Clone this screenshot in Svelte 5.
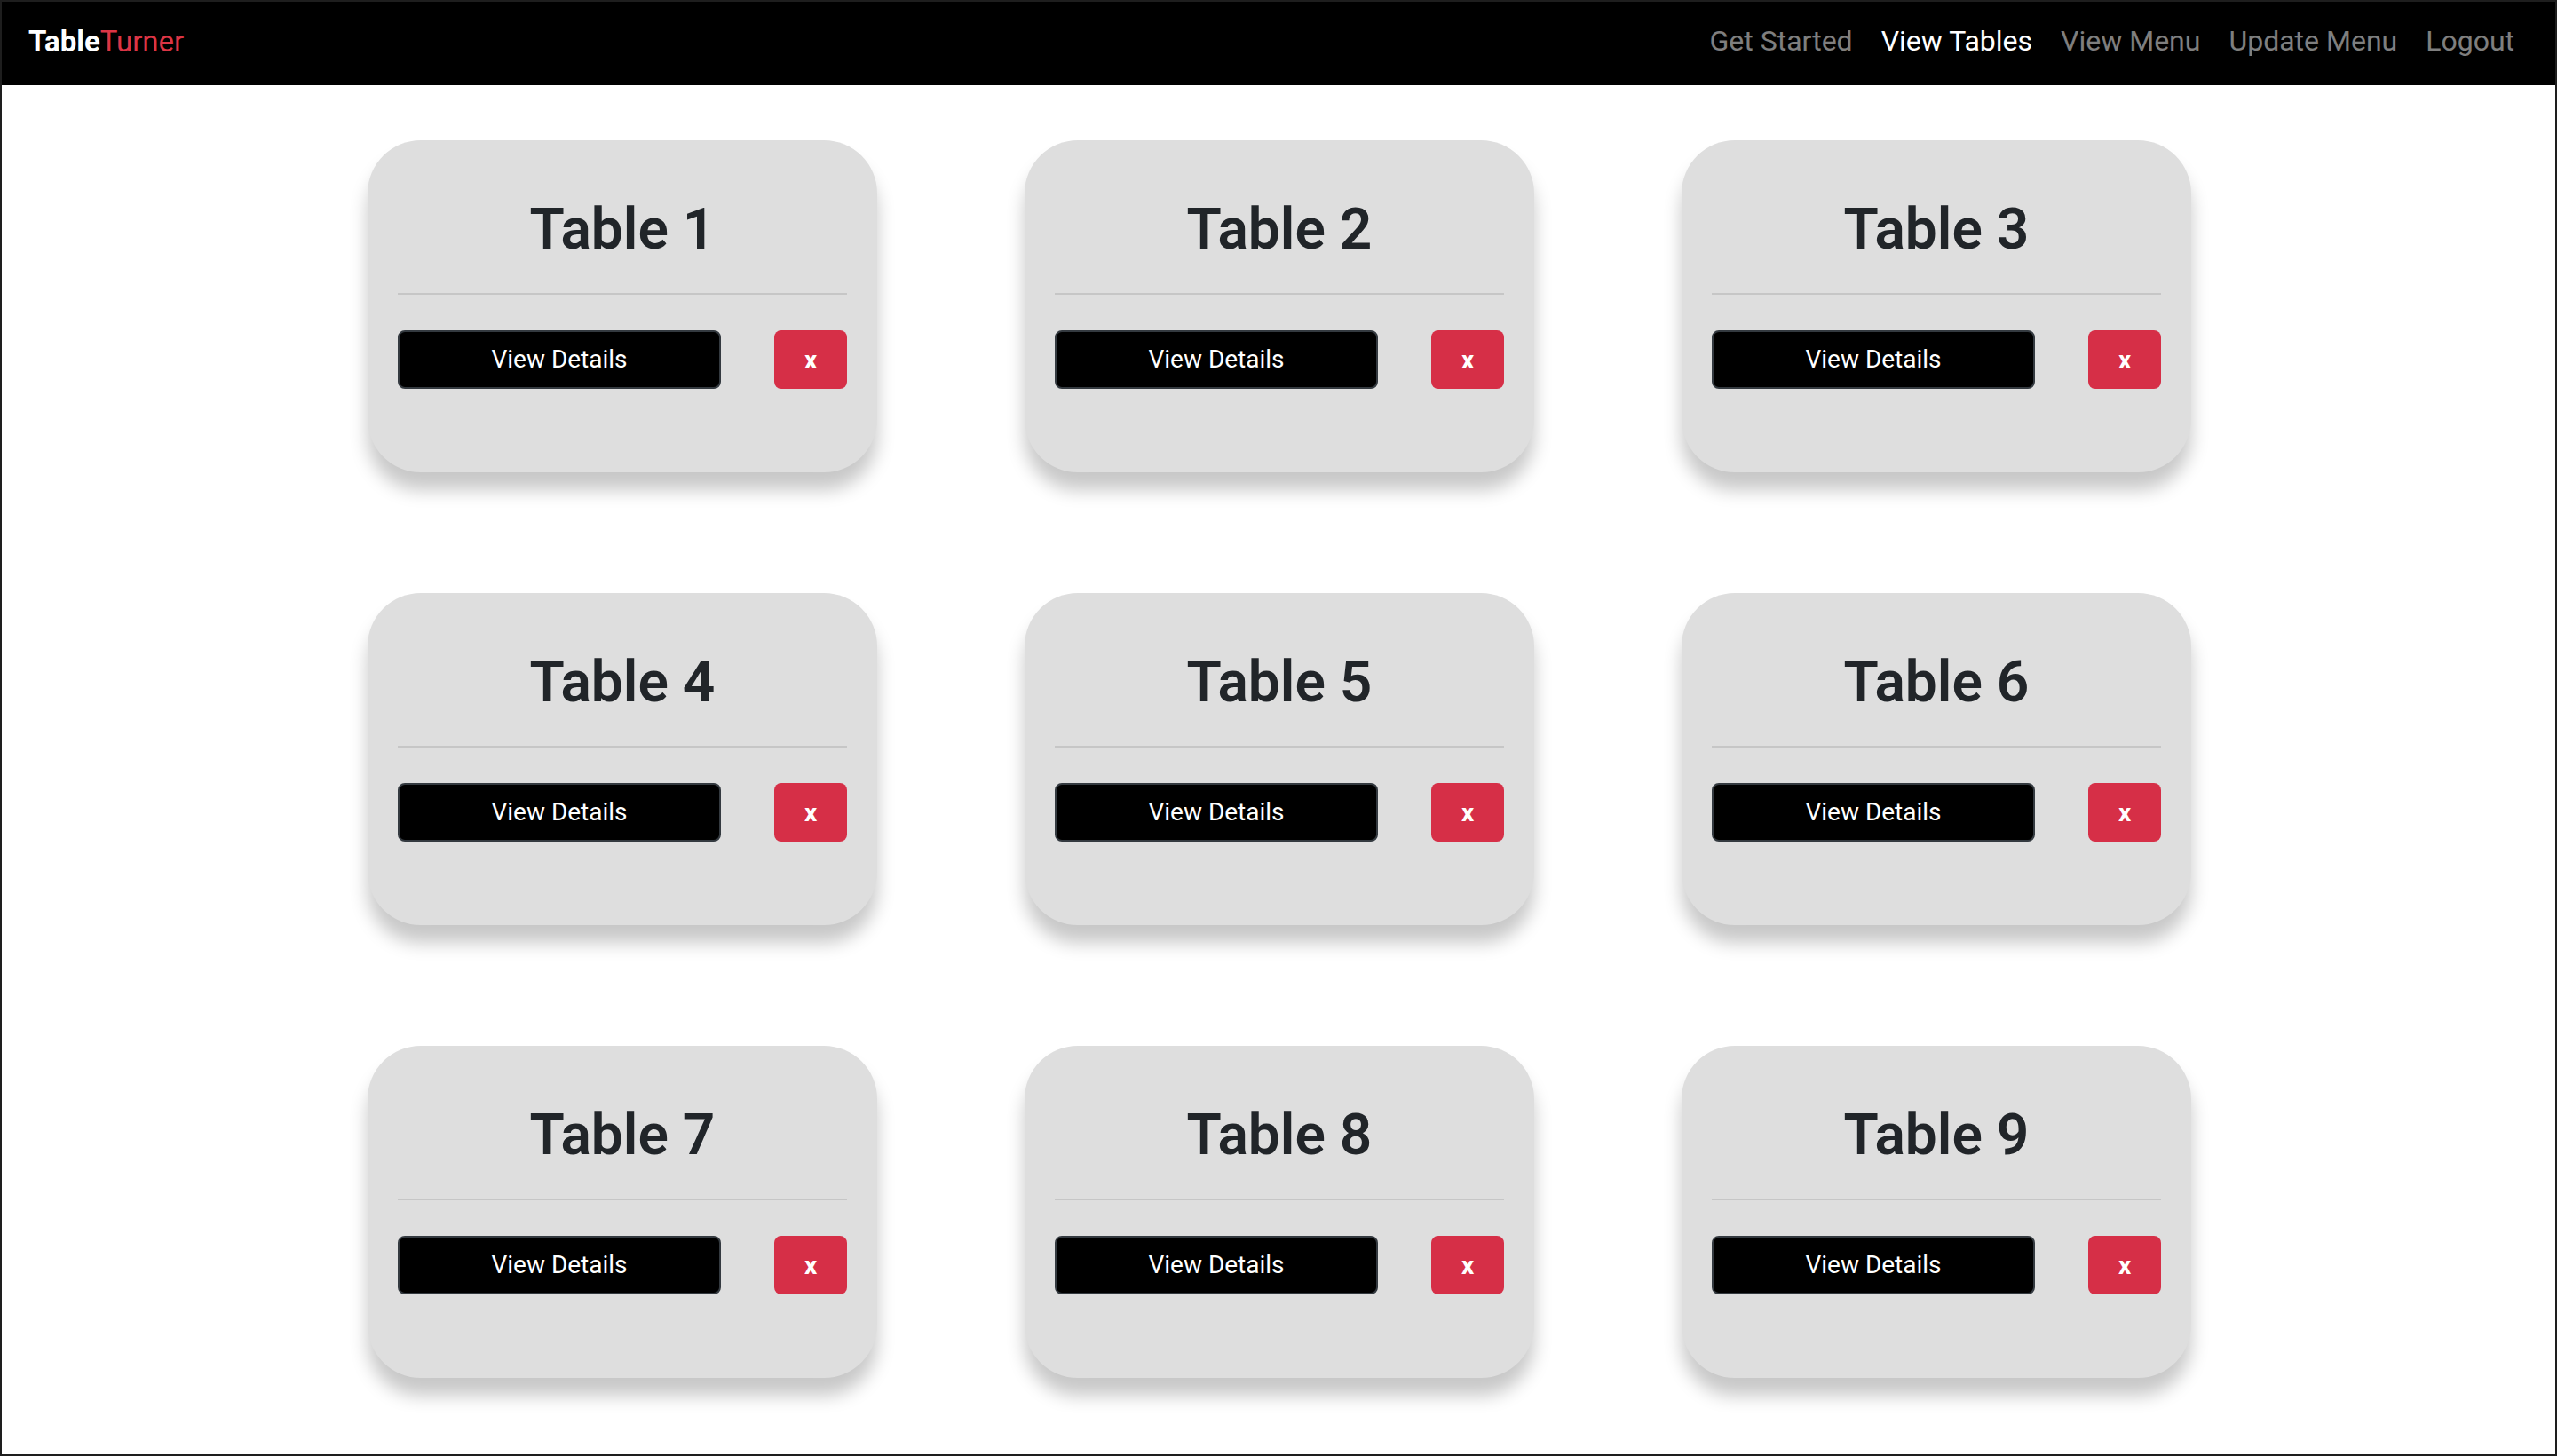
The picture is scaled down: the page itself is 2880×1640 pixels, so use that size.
<script>
	const tables = [1, 2, 3, 4, 5, 6, 7, 8, 9];
	const links = [
		{ label: 'Get Started' },
		{ label: 'View Tables', active: true },
		{ label: 'View Menu' },
		{ label: 'Update Menu' },
		{ label: 'Logout' }
	];
</script>

<div class="page">
	<nav class="navbar">
		<a class="brand" href="#top"><strong>Table</strong><span>Turner</span></a>
		<ul class="links">
			{#each links as link}
				<li><a href="#top" class:active={link.active}>{link.label}</a></li>
			{/each}
		</ul>
	</nav>

	<main class="grid">
		{#each tables as n}
			<section class="card">
				<h2>Table {n}</h2>
				<hr />
				<div class="actions">
					<button class="details">View Details</button>
					<button class="remove">x</button>
				</div>
			</section>
		{/each}
	</main>
</div>

<style>
	:global(body) {
		margin: 0;
		background: #fff;
	}

	.page {
		box-sizing: border-box;
		height: 1640px;
		border: 2px solid #1e1e1e;
		font-family: Roboto, 'Liberation Sans', sans-serif;
		overflow: hidden;
	}

	.navbar {
		display: flex;
		align-items: center;
		justify-content: space-between;
		height: 94px;
		padding: 0 30px 6px 30px;
		box-sizing: border-box;
		background: #000;
	}

	.brand {
		font-size: 33px;
		color: #dc3545;
		text-decoration: none;
	}

	.brand strong {
		font-weight: 700;
		color: #fff;
	}

	.links {
		display: flex;
		margin: 0;
		padding: 0;
		list-style: none;
	}

	.links a {
		display: block;
		padding: 0 16px;
		font-size: 32px;
		color: rgba(255, 255, 255, 0.5);
		text-decoration: none;
	}

	.links a.active {
		color: #fff;
	}

	.grid {
		display: grid;
		grid-template-columns: repeat(3, 574px);
		justify-content: center;
		gap: 136px 166px;
		padding: 62px 0 0 2px;
	}

	.card {
		box-sizing: border-box;
		height: 374px;
		padding: 63px 34px 0;
		background: #dedede;
		border-radius: 60px;
		box-shadow: 0 20px 20px rgba(0, 0, 0, 0.22);
	}

	h2 {
		margin: 0;
		font-size: 64px;
		font-weight: 600;
		line-height: 76px;
		text-align: center;
		color: #212529;
	}

	hr {
		height: 2px;
		margin: 33px 0 40px;
		border: 0;
		background: #c6c6c6;
	}

	.actions {
		display: flex;
		justify-content: space-between;
	}

	button {
		box-sizing: border-box;
		height: 66px;
		padding: 0;
		border-radius: 8px;
		font-family: inherit;
		font-size: 28px;
		color: #fff;
		cursor: pointer;
	}

	.details {
		width: 364px;
		padding-bottom: 2px;
		background: #000;
		border: 2px solid #343a40;
	}

	.remove {
		width: 82px;
		background: #d62f47;
		border: 0;
		font-weight: 700;
	}
</style>
